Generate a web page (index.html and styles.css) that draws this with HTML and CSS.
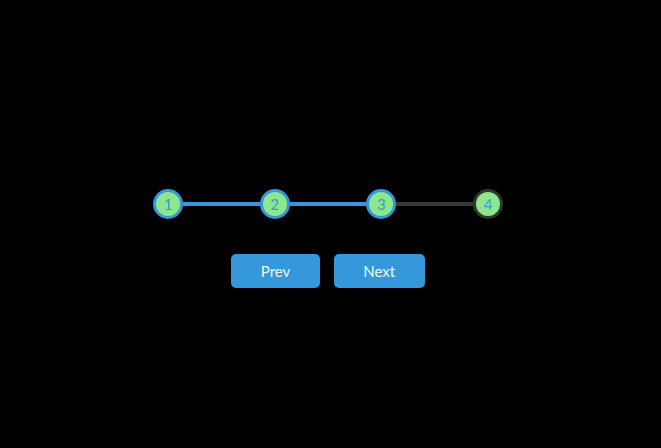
FILE: index.html
```html
<!DOCTYPE html>
<html lang="en">
<head>
<meta charset="UTF-8">
<title>Progress Steps</title>
<link rel="stylesheet" href="styles.css">
</head>
<body>
<div class="wrap">
  <div class="progress">
    <div class="circle active">1</div>
    <div class="seg active"></div>
    <div class="circle active">2</div>
    <div class="seg active"></div>
    <div class="circle active">3</div>
    <div class="seg"></div>
    <div class="circle">4</div>
  </div>
  <div class="buttons">
    <button class="btn">Prev</button>
    <button class="btn">Next</button>
  </div>
</div>
</body>
</html>
```
FILE: styles.css
```css
* { box-sizing: border-box; }
html, body { margin: 0; padding: 0; background: #000; }
body {
  width: 661px;
  height: 448px;
  font-family: Lato, "Liberation Sans", sans-serif;
  overflow: hidden;
}
.wrap {
  width: 656px;
  padding-top: 189px;
  display: flex;
  flex-direction: column;
  align-items: center;
}
.progress {
  width: 350px;
  display: flex;
  align-items: center;
  margin-bottom: 35px;
}
.circle {
  width: 30px;
  height: 30px;
  flex: none;
  border-radius: 50%;
  background: #8ee88b;
  border: 3px solid #2f3a2f;
  color: #3498db;
  font-size: 15px;
  display: flex;
  align-items: center;
  justify-content: center;
  line-height: 1;
}
.circle.active { border-color: #3498db; }
.seg {
  flex: 1;
  height: 4px;
  background: #383838;
}
.seg.active { background: #3498db; }
.buttons {
  display: flex;
  gap: 14px;
}
.btn {
  font-family: Lato, "Liberation Sans", sans-serif;
  font-size: 15px;
  color: #f2f8fd;
  background: #3498db;
  border: 0;
  border-radius: 5px;
  height: 34px;
  padding: 0 29.5px 1px;
  cursor: pointer;
}
```
